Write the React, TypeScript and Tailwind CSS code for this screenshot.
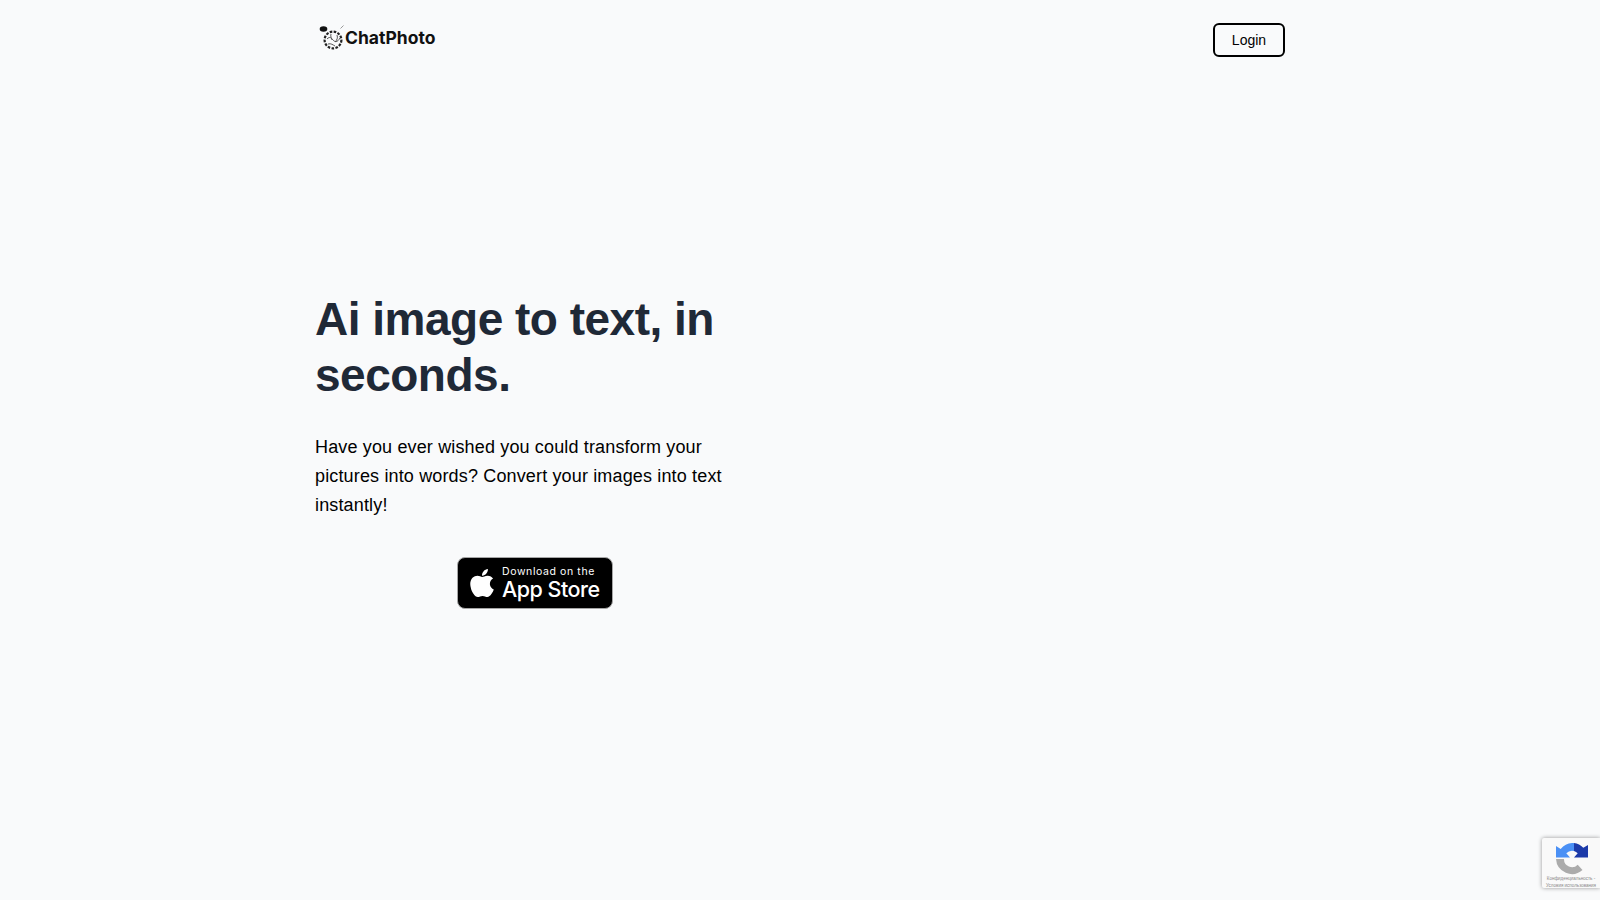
import { FaApple } from "react-icons/fa";

const Logo = () => (
  <svg width="28" height="28" viewBox="0 0 28 28" fill="none" className="shrink-0">
    <ellipse cx="4.5" cy="5" rx="3.8" ry="2.8" fill="#111" />
    <path d="M21.5 4.5l3-3" stroke="#999" strokeWidth="1" />
    <circle cx="14" cy="16" r="8.4" stroke="#222" strokeWidth="2.2" strokeDasharray="2.6 1.4" />
    <path
      d="M8 15c3-3 4-1 6 1s4 3 7-2M9 20c3-1 5 1 7 2M12 10c-1 3 1 4 1 6M18 11c1 3 0 5-2 7"
      stroke="#444"
      strokeWidth="0.9"
    />
  </svg>
);

const Recaptcha = () => (
  <div className="absolute right-0 top-[838px] w-[58px] h-[50px] bg-[#f9f9f9] rounded-l-[2px] shadow-[0_0_4px_rgba(0,0,0,0.4)] overflow-hidden flex flex-col items-center">
    <svg width="32" height="32" viewBox="0 0 32 32" className="mt-[5px] ml-[2px] shrink-0">
      <path d="M0 16H8A8 8 0 0 0 21.7 21.7L26.5 27A16 16 0 0 1 0 16Z" fill="#ababab" />
      <path d="M18 0V8A8 8 0 0 0 10.3 10.3L14 14.5H0V3L4.7 6A16 16 0 0 1 18 0Z" fill="#4a90f5" />
      <path d="M18 0A16 16 0 0 1 27.3 4.7L32 2V14.5H18L21.7 10.3A8 8 0 0 0 18 8Z" fill="#1c3aa9" />
    </svg>
    <div className="text-[4.5px] leading-[6.5px] text-[#888] text-center whitespace-nowrap font-['Liberation_Sans',sans-serif] mt-[1px]">
      <div>Конфиденциальность -</div>
      <div>Условия использования</div>
    </div>
  </div>
);

export default function App() {
  return (
    <div className="relative h-[900px] overflow-hidden bg-[#f9fafb] font-['Liberation_Sans',Arial,sans-serif]">
      <div className="w-[970px] ml-[315px]">
        <header className="flex items-start justify-between pt-[23px]">
          <a href="#" className="flex items-center ml-[4px] mt-[1px]">
            <Logo />
            <span className="font-['Inter',sans-serif] font-bold text-[17.5px] leading-[28px] text-[#111] -ml-[2px]">
              ChatPhoto
            </span>
          </a>
          <button className="w-[72px] h-[34px] border-2 border-black rounded-md text-sm text-black">
            Login
          </button>
        </header>

        <main className="w-[440px] pt-[234px]">
          <h1 className="text-[46px] leading-[56px] tracking-[-0.5px] font-bold text-[#1f2937]">
            Ai image to text, in seconds.
          </h1>
          <p className="mt-[30px] text-lg leading-[29px] tracking-[0.15px] text-black">
            Have you ever wished you could transform your pictures into words? Convert your images
            into text instantly!
          </p>
          <div className="flex justify-center mt-[37px]">
            <a
              href="#"
              className="flex items-center w-[156px] h-[52px] bg-black border border-[#a6a6a6] rounded-[8px] text-white pl-[8px]"
            >
              <FaApple className="text-[32px] shrink-0" />
              <div className="ml-[4px] flex flex-col">
                <span className="text-[10.5px] leading-[11px] tracking-[0.6px] font-['Inter',sans-serif]">
                  Download on the
                </span>
                <span className="text-[21.5px] leading-[24px] font-['Inter',sans-serif] font-medium tracking-[-0.5px]">
                  App Store
                </span>
              </div>
            </a>
          </div>
        </main>
      </div>
      <Recaptcha />
    </div>
  );
}
